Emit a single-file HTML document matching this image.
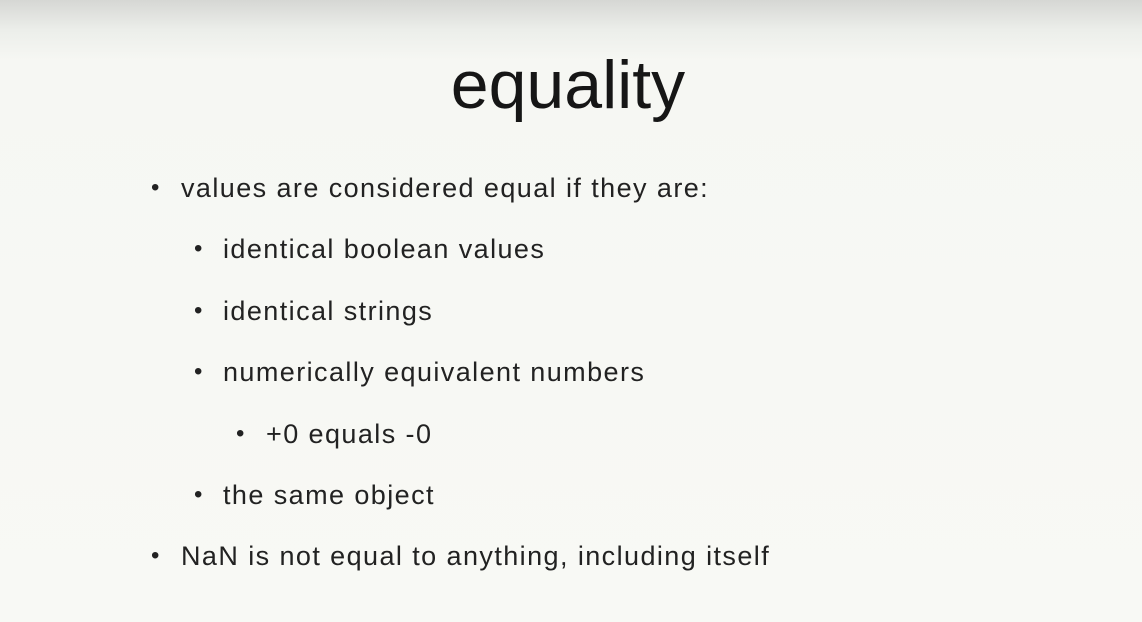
<!DOCTYPE html>
<html><head><style>
html,body{margin:0;padding:0}
body{width:1142px;height:622px;overflow:hidden;position:relative;background:linear-gradient(to bottom,#d6d7d4 0px,#eceeea 30px,#f6f7f3 60px,#f8f9f5 100%);font-family:"Liberation Sans",Arial,sans-serif;color:#222}
.t{position:absolute;left:-3px;width:1142px;text-align:center;top:45px;font-size:68px;line-height:80px;color:#161616;letter-spacing:0px}
.l{position:absolute;font-size:27px;line-height:32px;white-space:nowrap;letter-spacing:1.42px;word-spacing:0px}
.b{position:absolute;font-size:24px;line-height:32px}
</style></head><body>
<div class="t">equality</div>
<div class="b" style="left:151px;top:172px">•</div><div class="l" style="left:181px;top:172px">values are considered equal if they are:</div>
<div class="b" style="left:194px;top:233px">•</div><div class="l" style="left:223px;top:233px">identical boolean values</div>
<div class="b" style="left:194px;top:295px">•</div><div class="l" style="left:223px;top:295px">identical strings</div>
<div class="b" style="left:194px;top:356px">•</div><div class="l" style="left:223px;top:356px">numerically equivalent numbers</div>
<div class="b" style="left:236px;top:418px">•</div><div class="l" style="left:266px;top:418px">+0 equals -0</div>
<div class="b" style="left:194px;top:479px">•</div><div class="l" style="left:223px;top:479px">the same object</div>
<div class="b" style="left:151px;top:540px">•</div><div class="l" style="left:181px;top:540px">NaN is not equal to anything, including itself</div>
</body></html>
